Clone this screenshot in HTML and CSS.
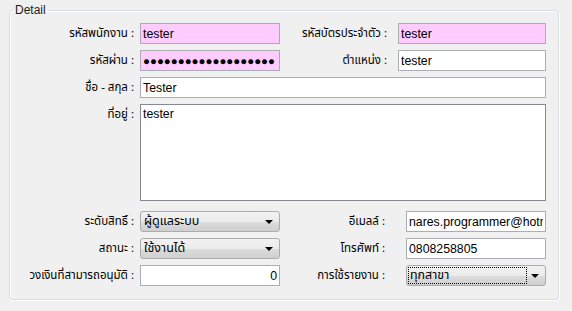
FILE: index.html
```html
<!DOCTYPE html>
<html lang="th">
<head>
  <meta charset="UTF-8">
  <meta name="viewport" content="width=device-width, initial-scale=1.0">
  <title>Detail</title>
  <link rel="stylesheet" href="styles.css">
</head>
<body>
  <fieldset class="detail">
    <legend>Detail</legend>

    <!-- Top part: codes, name and address -->
    <div class="form-grid top-grid">
      <label class="lbl" for="empId">รหัสพนักงาน :</label>
      <input class="field key" id="empId" type="text" value="tester">
      <label class="lbl lbl-right" for="cardId">รหัสบัตรประจำตัว :</label>
      <input class="field key" id="cardId" type="text" value="tester">

      <label class="lbl" for="pass">รหัสผ่าน :</label>
      <input class="field key dots" id="pass" type="text" value="●●●●●●●●●●●●●●●●●●●">
      <label class="lbl lbl-right" for="position">ตำแหน่ง :</label>
      <input class="field" id="position" type="text" value="tester">

      <label class="lbl" for="fullName">ชื่อ - สกุล :</label>
      <input class="field wide" id="fullName" type="text" value="Tester">

      <label class="lbl lbl-top" for="address">ที่อยู่ :</label>
      <textarea class="field wide address" id="address">tester</textarea>
    </div>

    <!-- Bottom part: permissions and contact -->
    <div class="form-grid bottom-grid">
      <label class="lbl" for="role">ระดับสิทธิ์ :</label>
      <div class="combo">
        <select id="role"><option>ผู้ดูแลระบบ</option></select>
      </div>
      <label class="lbl lbl-right2" for="email">อีเมลล์ :</label>
      <input class="field" id="email" type="text" value="nares.programmer@hotmail.com">

      <label class="lbl" for="status">สถานะ :</label>
      <div class="combo">
        <select id="status"><option>ใช้งานได้</option></select>
      </div>
      <label class="lbl lbl-right2" for="phone">โทรศัพท์ :</label>
      <input class="field" id="phone" type="text" value="0808258805">

      <label class="lbl" for="limit">วงเงินที่สามารถอนุมัติ :</label>
      <input class="field num" id="limit" type="text" value="0">
      <label class="lbl lbl-right2" for="report">การใช้รายงาน :</label>
      <div class="combo focused">
        <select id="report"><option>ทุกสาขา</option></select>
      </div>
    </div>
  </fieldset>
</body>
</html>
```

FILE: styles.css
```css
body {
  margin: 0;
  padding: 0;
  background: #f0f0f0;
  font-family: Tahoma, "Microsoft Sans Serif", "Noto Sans Thai", "Noto Sans", "DejaVu Sans", sans-serif;
  font-size: 11.5px;
  color: #000;
  width: 572px;
  height: 311px;
  overflow: hidden;
}

.detail {
  box-sizing: border-box;
  width: 550px;
  margin: 4px 0 0 9px;
  padding: 0 12px 13px 0;
  border: 1px solid #d5dfe5;
  border-radius: 3px;
  box-shadow: 1px 1px 0 #fff, inset 1px 1px 0 #fff;
}

.detail legend {
  margin-left: 3px;
  padding: 0 2px;
  font-family: "Liberation Sans", Arial, sans-serif;
  font-size: 12px;
  line-height: 13px;
  color: #1b1b1b;
}

.form-grid {
  display: grid;
  row-gap: 6px;
  grid-auto-rows: 21px;
}

.top-grid {
  margin-top: 6px;
  grid-template-columns: 130px 140px 118px 148px;
  grid-template-rows: 21px 21px 21px 97px;
}

.bottom-grid {
  margin-top: 10px;
  grid-template-columns: 130px 140px 126px 140px;
}

.lbl {
  align-self: center;
  text-align: right;
  padding-right: 6px;
  white-space: nowrap;
}

.lbl-right {
  padding-right: 11px;
}

.lbl-right2 {
  padding-right: 21px;
}

.lbl-top {
  align-self: start;
  padding-top: 2px;
}

.field {
  box-sizing: border-box;
  width: 100%;
  height: 21px;
  margin: 0;
  padding: 0 2px;
  border: 1px solid #abadb3;
  background: #fff;
  font-family: "Liberation Sans", Arial, sans-serif;
  font-size: 12.3px;
  color: #000;
  outline: none;
}

.key {
  background: #ffccff;
}

.dots {
  font-size: 11.5px;
  letter-spacing: 0;
}

.wide {
  grid-column: 2 / 5;
}

.address {
  height: 97px;
  padding: 2px 2px;
  border-color: #868993;
  resize: none;
  line-height: 15px;
}

.num {
  text-align: right;
}

.combo {
  position: relative;
  height: 21px;
}

.combo select {
  appearance: none;
  -webkit-appearance: none;
  box-sizing: border-box;
  width: 100%;
  height: 21px;
  margin: 0;
  padding: 0 20px 0 3px;
  border: 1px solid #acacac;
  border-radius: 3px;
  background: linear-gradient(#f2f2f2, #ebebeb 50%, #dddddd 51%, #cfcfcf);
  font-family: Tahoma, "Noto Sans Thai", "Noto Sans", sans-serif;
  font-size: 12.5px;
  color: #000;
  outline: none;
}

.combo::after {
  content: "";
  position: absolute;
  right: 7px;
  top: 9px;
  border-left: 4px solid transparent;
  border-right: 4px solid transparent;
  border-top: 4px solid #000;
  pointer-events: none;
}

.focused::before {
  content: "";
  position: absolute;
  left: 2px;
  top: 2px;
  right: 19px;
  bottom: 2px;
  border: 1px dotted #000;
  pointer-events: none;
}
```
